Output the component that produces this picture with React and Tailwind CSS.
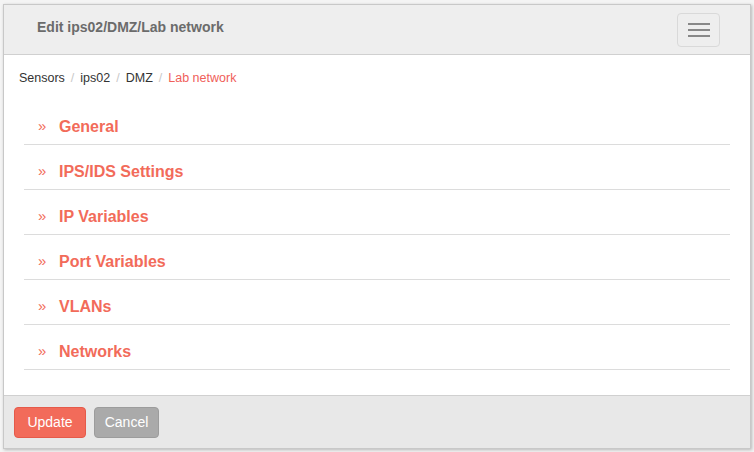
export default function App() {
  const items = ["General", "IPS/IDS Settings", "IP Variables", "Port Variables", "VLANs", "Networks"];
  return (
    <div className="w-[754px] h-[452px] bg-[#f4f4f4] pt-[4px] pl-[3px]" style={{ fontFamily: '"Liberation Sans", Arial, sans-serif' }}>
      <div className="w-[748px] h-[445px] flex flex-col bg-white border border-[#c8c8c8] shadow-[1px_1px_3px_rgba(0,0,0,0.25)]">
        <div className="h-[50px] bg-[#eeeeee] border-b border-[#d0d0d0] flex items-center justify-between pl-[33px] pr-[30px] shrink-0">
          <div className="text-[14px] font-bold text-[#6b6b6b] -mt-[4px]">Edit ips02/DMZ/Lab network</div>
          <button className="w-[43px] h-[34px] border border-[#d9d9d9] rounded-[4px] flex flex-col items-center justify-center gap-[4px] mt-[1px]">
            <span className="block w-[22px] h-[2px] bg-[#888]"></span>
            <span className="block w-[22px] h-[2px] bg-[#888]"></span>
            <span className="block w-[22px] h-[2px] bg-[#888]"></span>
          </button>
        </div>
        <div className="flex-1 flex flex-col">
          <div className="flex items-center text-[12.5px] pl-[15px] pt-[1px] h-[45px] text-[#333]">
            <span>Sensors</span>
            <span className="text-[#c8c8c8] px-[6px]">/</span>
            <span>ips02</span>
            <span className="text-[#c8c8c8] px-[6px]">/</span>
            <span>DMZ</span>
            <span className="text-[#c8c8c8] px-[6px]">/</span>
            <span className="text-[#f0605a]">Lab network</span>
          </div>
          <div className="mx-[20px]">
            {items.map((t) => (
              <div key={t} className="h-[45px] border-b border-[#dcdcdc] flex items-center pl-[14px] pt-[9px]">
                <span className="text-[#f26b5a] text-[15px] w-[21px]">»</span>
                <span className="text-[#f26b5a] text-[16px] font-bold">{t}</span>
              </div>
            ))}
          </div>
        </div>
        <div className="h-[53px] bg-[#e8e8e8] border-t border-[#d0d0d0] flex items-center pl-[10px] gap-[8px] shrink-0">
          <button className="h-[31px] w-[72px] bg-[#f26b5a] border border-[#e55a4a] rounded-[4px] text-white text-[14px]">Update</button>
          <button className="h-[31px] w-[65px] bg-[#aaaaaa] border border-[#9c9c9c] rounded-[4px] text-white text-[14px]">Cancel</button>
        </div>
      </div>
    </div>
  );
}
